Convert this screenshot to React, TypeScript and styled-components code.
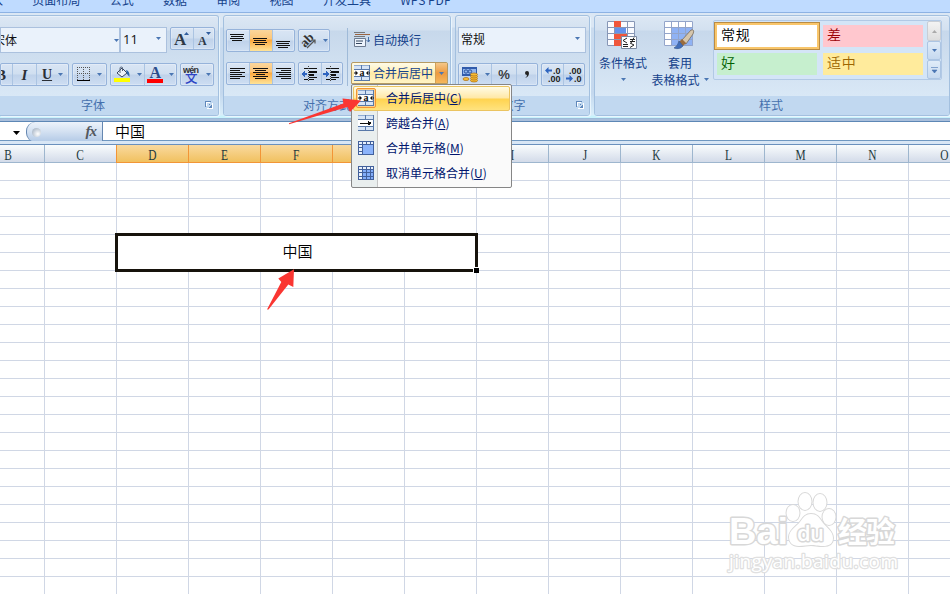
import React from "react";
import styled, { createGlobalStyle, css } from "styled-components";

const Global = createGlobalStyle`
  * { box-sizing: border-box; }
  html, body { margin: 0; padding: 0; overflow: hidden; }
  body { font: 12px/16px "Noto Sans CJK SC", "Noto Sans", sans-serif; color: #15428b; background: #fff; }
  svg { display: block; flex: none; }
`;

const Window = styled.div`
  position: relative;
  width: 950px;
  height: 594px;
  overflow: hidden;
  display: flex;
  flex-direction: column;
  background: #fff;
`;

/* ---------- tabs ---------- */
const TabStrip = styled.nav`
  flex: none;
  height: 13px;
  display: flex;
  align-items: flex-end;
  gap: 29.3px;
  padding: 0 0 4px;
  margin-left: -21px;
  background: #bfdbff;
  border-bottom: 1px solid #8db2e3;
  white-space: nowrap;
  overflow: hidden;
`;
const Tab = styled.span`
  line-height: 16px;
`;

/* ---------- ribbon ---------- */
const Ribbon = styled.header`
  flex: none;
  height: 109px;
  display: grid;
  grid-template-columns: 219px 228px 135px 356px;
  grid-template-rows: 101px;
  column-gap: 4px;
  padding-top: 2px;
  background: linear-gradient(#dbe7f4 0 14px, #cbdcef 15px, #c4d8ee 80px, #d9eefa 102px, #c8f3fc 103px 105px, #9dbad8 105px 106px, #a9bfdc 106px 108px, #5d87b5 108px);
`;
const Group = styled.section<{ $first?: boolean }>`
  display: flex;
  flex-direction: column;
  border: 1px solid #a3c0df;
  border-left-width: ${(p) => (p.$first ? 0 : 1)}px;
  border-radius: ${(p) => (p.$first ? "0 3px 3px 0" : "3px")};
  box-shadow: 1px 1px 0 #e9f5fd, inset 0 1px 0 #e8f0f9;
  background: linear-gradient(#dce7f4 0, #d3e1f0 14px, #c7d8eb 15px, #d9e8f6 80px);
  overflow: hidden;
`;
const GroupBody = styled.div<{ $pad?: string }>`
  flex: none;
  height: 80px;
  padding: ${(p) => p.$pad || "0"};
`;
const GroupLabel = styled.footer<{ $shift?: number }>`
  flex: 1;
  display: grid;
  grid-template-columns: 1fr auto;
  align-items: center;
  background: #c1d8f0;
  color: #4570ad;
  text-align: center;
  padding: 0 4px 1px ${(p) => p.$shift || 0}px;
`;
const Row = styled.div<{ $gap?: number; $mt?: number; $align?: string }>`
  display: flex;
  align-items: ${(p) => p.$align || "center"};
  gap: ${(p) => p.$gap ?? 3}px;
  margin-top: ${(p) => p.$mt ?? 0}px;
`;
const Combo = styled.div<{ $w: number; $pad?: number }>`
  width: ${(p) => p.$w}px;
  height: 26px;
  display: flex;
  align-items: center;
  justify-content: space-between;
  padding: 0 5px 3px ${(p) => p.$pad ?? 2}px;
  background: #eaf2fb;
  border: 1px solid #abc1de;
  color: #111;
  white-space: nowrap;
`;
const ButtonSet = styled.div`
  display: flex;
  height: 23px;
  border: 1px solid #96b3da;
  border-radius: 2px;
  background: linear-gradient(#d9e5f4 0, #d0dff0 10px, #bfd2ea 11px, #cfdff3 22px);
  box-shadow: inset 0 0 0 1px rgba(255, 255, 255, 0.25);
`;
const Tool = styled.button<{ $w: number; $on?: boolean; $end?: boolean }>`
  width: ${(p) => p.$w}px;
  height: 21px;
  display: flex;
  align-items: center;
  justify-content: ${(p) => (p.$end ? "flex-start" : "center")};
  gap: 6px;
  padding: 0;
  border: 0;
  background: ${(p) => (p.$on ? "linear-gradient(#fbd69c, #fdc679 9px, #fca93e 10px, #fee398 21px)" : "none")};
  & + & { border-left: 1px solid #abc4e2; }
`;
const Letter = styled.span<{ $size: number; $italic?: boolean; $line?: boolean }>`
  font: ${(p) => (p.$italic ? "italic " : "")}bold ${(p) => p.$size}px/18px "Liberation Serif", serif;
  color: #2b2f36;
  ${(p) => p.$line && css`text-decoration: underline;`}
`;
const Percent = styled.span`
  font: 13px/18px "Liberation Sans", sans-serif;
  -webkit-text-stroke: 0.2px #222;
  color: #222;
`;
const AlignColumns = styled.div`
  flex: none;
  display: flex;
  height: 80px;
`;
const AlignLeft = styled.div`
  width: 124px;
  height: 58px;
  margin-top: 12px;
  padding: 1px 0 0 2px;
  border-right: 1px solid #9fbad8;
`;
const AlignRight = styled.div`
  display: flex;
  flex-direction: column;
  padding: 14px 0 0 3px;
`;
const WrapButton = styled.div`
  height: 19px;
  display: flex;
  align-items: center;
  gap: 3px;
  padding-left: 3px;
`;
const MergeButton = styled.div`
  width: 97px;
  height: 22px;
  margin-top: 13px;
  display: grid;
  grid-template-columns: 83px 12px;
  border: 1px solid #b59a62;
  border-radius: 2px 2px 0 0;
  background: linear-gradient(#fffbe8, #fff2bd 8px, #ffe9a5 10px, #fff3c5);
  white-space: nowrap;
`;
const MergeMain = styled.div`
  display: flex;
  align-items: center;
  gap: 3px;
  padding: 0 0 1px 2px;
`;
const MergeDrop = styled.div`
  display: grid;
  place-items: center;
  border-left: 1px solid #d1a257;
  background: linear-gradient(#f5c789, #ed9a3f 10px, #f5b75c);
`;

/* ---------- styles group ---------- */
const StyleColumns = styled.div`
  flex: none;
  display: grid;
  grid-template-columns: 57px 61px 229px;
  height: 80px;
`;
const BigButton = styled.div<{ $dx?: number }>`
  display: flex;
  flex-direction: column;
  align-items: center;
  padding-top: 5px;
  margin-left: ${(p) => p.$dx ?? -1}px;
  white-space: nowrap;
`;
const BigText = styled.div`
  height: 17px;
  display: flex;
  align-items: center;
  justify-content: center;
  gap: 4px;
`;
const BigIcon = styled.div`
  height: 33px;
  margin-left: -1px;
`;
const Gallery = styled.div`
  display: grid;
  grid-template-columns: 1fr 14px;
  width: 229px;
  height: 60px;
  margin-top: 4px;
  border: 1px solid #b2c9e5;
  border-radius: 2px;
  background: #d4e5f7;
`;
const Swatches = styled.div`
  display: grid;
  grid-template-columns: 100px 100px;
  grid-template-rows: 22px 22px;
  gap: 6px;
  padding: 4px 0 0 3px;
`;
const Swatch = styled.div<{ $bg: string; $fg: string; $sel?: boolean }>`
  padding-left: 4px;
  font-size: 14px;
  line-height: 18px;
  letter-spacing: 0.8px;
  font-weight: 350;
  color: ${(p) => p.$fg};
  background: ${(p) => p.$bg};
  ${(p) => p.$sel && css`
    outline: 1px solid #b98b44;
    outline-offset: 2px;
    box-shadow: 0 0 0 2px #f9c66b;
  `}
`;
const Scroller = styled.div`
  display: grid;
  grid-template-rows: 20px 19px 19px;
`;
const ScrollBtn = styled.div<{ $off?: boolean }>`
  display: grid;
  place-items: center;
  border: 1px solid ${(p) => (p.$off ? "#c9ced5" : "#acc5e3")};
  border-radius: 2px;
  background: ${(p) => (p.$off ? "linear-gradient(#f3f3f3, #dedede)" : "linear-gradient(#e0ecf8, #c6d9ef)")};
`;

/* ---------- formula bar ---------- */
const FormulaBar = styled.div`
  flex: none;
  height: 19px;
  display: grid;
  grid-template-columns: 26px 77px 1fr;
  background: #fff;
  border-bottom: 1px solid #6f97c0;
`;
const NameBox = styled.div`
  display: flex;
  align-items: center;
  justify-content: flex-end;
  padding: 2px 6px 0 0;
`;
const FxBar = styled.div`
  display: flex;
  align-items: center;
  justify-content: space-between;
  padding: 0 6px 0 5px;
  border-left: 1px solid #6587b1;
  border-right: 1px solid #6587b1;
  border-radius: 9px 0 0 9px;
  background: linear-gradient(#edf3fb, #d5e2f2 45%, #b2c9e6);
`;
const Knob = styled.i`
  width: 9px;
  height: 9px;
  border-radius: 50%;
  background: radial-gradient(circle at 65% 65%, #fff, #c5ced9 55%, #98a8bc);
`;
const Fx = styled.span`
  font: italic bold 15px/16px "Liberation Serif", serif;
  color: #53585f;
  letter-spacing: -1px;
  padding-bottom: 2px;
`;
const CellText = styled.span`
  font-size: 15px;
  line-height: 17px;
  font-weight: 350;
  color: #000;
`;
const FormulaInput = styled.div`
  padding: 0 0 3px 12px;
  display: flex;
  align-items: center;
`;
const Gutter = styled.div`
  flex: none;
  height: 4px;
  background: #d8e6f5;
  border-bottom: 1px solid #6a90bd;
`;

/* ---------- sheet ---------- */
const cols = css`
  display: grid;
  grid-template-columns: 45px repeat(13, 72px);
  width: 981px;
`;
const HeadRow = styled.div`
  ${cols}
  flex: none;
  height: 18px;
  grid-template-rows: 18px;
`;
const Head = styled.div<{ $sel?: boolean; $first?: boolean }>`
  display: grid;
  place-items: center;
  height: 18px;
  padding-top: 3px;
  margin-left: ${(p) => (p.$first ? -28 : 0)}px;
  border-right: 1px solid ${(p) => (p.$sel ? "#f29536" : "#9eb6ce")};
  border-bottom: 1px solid ${(p) => (p.$sel ? "#f29536" : "#9eb6ce")};
  background: ${(p) => (p.$sel ? "linear-gradient(#f9d99f, #f1c15f)" : "linear-gradient(#f9fcfd, #d3dbe9)")};
  box-shadow: ${(p) => (p.$sel ? "-1px 0 0 #f29536" : "none")};
`;
const HeadLetter = styled.span`
  font: 15px/14px "Liberation Serif", serif;
  color: #1e393d;
  transform: scaleX(0.76);
`;
const Sheet = styled.main`
  ${cols}
  grid-auto-rows: 18px;
`;
const Cell = styled.div<{ $r: number; $c: number }>`
  grid-row: ${(p) => p.$r};
  grid-column: ${(p) => p.$c};
  border-right: 1px solid #d0d7e5;
  border-bottom: 1px solid #d0d7e5;
`;
const MergedCell = styled.div`
  position: relative;
  grid-row: 5 / 7;
  grid-column: 3 / 8;
  margin: -2px -1px -1px -2px;
  border: 3px solid #17130c;
  padding: 0 0 4px 2px;
  display: grid;
  place-items: center;
  background: #fff;
  z-index: 1;
`;
const FillHandle = styled.i`
  position: absolute;
  right: -4px;
  bottom: -4px;
  width: 6px;
  height: 6px;
  background: #000;
  border: solid #fff;
  border-width: 1px 0 0 1px;
`;

/* ---------- popup menu ---------- */
const Menu = styled.div`
  position: absolute;
  left: 351px;
  top: 84px;
  width: 161px;
  height: 104px;
  padding: 1px;
  border: 1px solid #868686;
  border-radius: 2px;
  background: linear-gradient(90deg, #e9eeee 0 25px, #c5c5c5 25px 26px, #fafafa 26px);
`;
const MenuItem = styled.div<{ $hot?: boolean }>`
  height: 25px;
  display: grid;
  grid-template-columns: 33px 1fr;
  align-items: center;
  color: #00156e;
  white-space: nowrap;
  ${(p) => p.$hot && css`
    grid-template-columns: 32px 1fr;
    border: 1px solid #ebc461;
    border-radius: 2px;
    background: linear-gradient(#fffbe5, #ffe8a6 11px, #ffd34f 12px, #ffe37f);
  `}
`;
const MenuText = styled.span`
  padding-bottom: 1px;
`;
const MenuIcon = styled.span<{ $hot?: boolean }>`
  width: 20px;
  height: 20px;
  display: grid;
  place-items: center;
  margin: 0 0 1px ${(p) => (p.$hot ? 2 : 3)}px;
  border: 1px solid ${(p) => (p.$hot ? "#f29536" : "transparent")};
  border-radius: 2px;
  background: ${(p) => (p.$hot ? "#fdd18b" : "none")};
`;
const Overlay = styled.svg<{ $x: number; $y: number }>`
  position: absolute;
  left: ${(p) => p.$x}px;
  top: ${(p) => p.$y}px;
  z-index: 3;
  pointer-events: none;
`;
const Clip = styled.span<{ $n?: number }>`
  display: flex;
  justify-content: flex-end;
  width: ${(p) => p.$n ?? 16}px;
  overflow: hidden;
`;
const Size = styled.span`
  font: 13px/18px "Open Sans", sans-serif;
`;
const LabelText = styled.span<{ $dx: number }>`
  margin-right: ${(p) => -p.$dx}px;
  white-space: nowrap;
`;

/* ---------- icons ---------- */
const Down = ({ c = "#4a76b3", w = 5 }: { c?: string; w?: number }) => (
  <svg width={w} height={(w + 1) / 2} viewBox={`0 0 ${w} ${(w + 1) / 2}`}>
    <path d={`M0 0H${w}L${w / 2} ${(w + 1) / 2}Z`} fill={c} />
  </svg>
);
const Comma = () => (
  <svg width="6" height="9"><path d="M3 1a2 2 0 1 0 0 4q0 2-2 3 4-1 4-5 0-2-2-2z" fill="#222" /></svg>
);
const Lines = ({ rows, top = 3, align = "c" }: { rows: number[]; top?: number; align?: string }) => (
  <svg width="16" height="18" shapeRendering="crispEdges">
    {rows.map((w, i) => (
      <rect key={i} x={align === "l" ? 0 : align === "r" ? 15 - w : Math.floor((15 - w) / 2)} y={top + i * 2} width={w} height="1" fill="#111" />
    ))}
  </svg>
);
const Indent = ({ right }: { right?: boolean }) => (
  <svg width="18" height="16" shapeRendering="crispEdges">
    <path d="M3 2.500h4M8 2.500h8M8 11.500h8M3 13.500h4M8 13.500h5" stroke="#111" />
    <path d="M8 6h8M8 9h5" stroke="#111" strokeWidth="2" />
    <path d="M7.500 0v16" stroke="#444" strokeDasharray="1 1" />
    <path d={right ? "M6 8L3 4.500V7H0v2h3v2.500z" : "M0 8l3.500-3.500V7H6v2H3.500v2.500z"} fill="#2f65c0" />
  </svg>
);
const Launcher = () => (
  <svg width="9" height="9" viewBox="0 0 9 9" shapeRendering="crispEdges">
    <path d="M.5 6V.5H6M3.500 3.500h1" fill="none" stroke="#5f87ba" />
    <path d="M3 7h4V3z" fill="#5f87ba" />
    <path d="M7.500 2v5.500H2M1.500 5V1.500H5" fill="none" stroke="#fff" />
  </svg>
);
const MergeIcon = ({ kind = "center" }: { kind?: string }) => (
  <svg width="16" height="16" viewBox="0 0 16 16" shapeRendering="crispEdges">
    <path d="M0 0h16v16H0z" fill="#8fabd3" />
    <path d="M0 1h7v3H0zM8 1h7v3H8zM0 12h7v3H0zM8 12h7v3H8z" fill="#d6e4f6" />
    <path d="M0 4.500h16M0 11.500h16M0 15.500h16M7.500 0v4M7.500 12v4M15.500 0v16" stroke="#5878a8" />
    <path d="M0 5h15v6H0z" fill="#fff" />
    {kind === "center" ? (
      <g shapeRendering="auto">
        <path d="M4 8L1.500 5.500v5zM12 8l2.500-2.500v5zM0 7.500h2v1H0zM14 7.500h2v1h-2z" fill="#111" transform="matrix(-1 0 0 1 16 0)" />
        <text x="8" y="10.500" textAnchor="middle" fontFamily="Liberation Serif, serif" fontWeight="700" fontSize="10" fill="#111">a</text>
      </g>
    ) : (
      <path d="M2 7.500h8V6l4 2-4 2.500V8.500H2z" fill="#111" />
    )}
  </svg>
);
const GridIcon = ({ split }: { split?: boolean }) => (
  <svg width="16" height="14" viewBox="0 0 16 14" shapeRendering="crispEdges">
    <path d="M0 0h16v14H0z" fill="#42609c" />
    <path d="M1 1h3v2H1zM5 1h3v2H5zM9 1h3v2H9zM13 1h2v2h-2zM1 4h3v2H1zM1 7h3v3H1zM1 11h3v2H1z" fill="#e8f0fc" />
    {split ? <path d="M5 4h3v2H5zM9 4h3v2H9zM13 4h2v2h-2zM5 7h3v3H5zM9 7h3v3H9zM13 7h2v3h-2zM5 11h3v2H5zM9 11h3v2H9zM13 11h2v2h-2z" fill="#82adfa" /> : <path d="M5 4h10v9H5z" fill="#8bb3fb" />}
  </svg>
);
const FontSizer = ({ big }: { big?: boolean }) => (
  <svg width="18" height="18">
    <text x={big ? 1 : 3} y="15" fontFamily="Liberation Serif, serif" fontWeight="700" fontSize={big ? 17 : 12} fill="#2e3947">A</text>
    <path d={big ? "M11 5h5l-2.500-3z" : "M11 2h5l-2.500 3z"} fill="#315e9e" />
  </svg>
);
const Borders = () => (
  <svg width="14" height="15" shapeRendering="crispEdges">
    <path d="M.5 0v13M6.500 0v13M12.500 0v13M0 .5h13M0 6.500h13" stroke="#555" strokeDasharray="1 1" />
    <path d="M0 13.500h13" stroke="#000" />
  </svg>
);
const Bucket = () => (
  <svg width="17" height="17" viewBox="0 0 17 17">
    <path d="M3 7l5-5 5 5-5 4z" fill="#eef3fb" stroke="#37465e" />
    <path d="M6 7V3q0-3 2.500-1.500V5" fill="none" stroke="#526078" />
    <path d="M12 4q4 1 3.500 7L13 8z" fill="#2d66a9" />
    <path d="M0 12h16v4H0z" fill="#ff0" />
  </svg>
);
const FontColor = () => (
  <svg width="16" height="18">
    <text x="2.500" y="12" fontFamily="Liberation Serif, serif" fontWeight="700" fontSize="16" fill="#2d4d8b">A</text>
    <path d="M0 13h16v4H0z" fill="#f00" />
  </svg>
);
const Phonetic = () => (
  <svg width="17" height="19">
    <text x="0" y="8" fontFamily="Liberation Sans, sans-serif" fontWeight="700" fontSize="9" textLength="16" fill="#333">wén</text>
    <text x="2" y="18" fontFamily="Noto Sans CJK SC, sans-serif" fontWeight="500" fontSize="12.500" fill="#2d45c5">文</text>
  </svg>
);
const Rotate = () => (
  <svg width="16" height="16">
    <text x="1" y="12" fontFamily="Liberation Serif, serif" fontWeight="700" fontSize="13" transform="rotate(-45 6 10)" fill="#333">ab</text>
    <path d="M6 15L14 7M10.500 7H14v3.500" fill="none" stroke="#555" strokeWidth="1.200" />
  </svg>
);
const WrapIcon = () => (
  <svg width="16" height="16">
    <path d="M0 .5h11M0 4.500h11" stroke="#777" />
    <path d="M1 2.500h15" stroke="#9b6441" />
    <path d="M.5 6.500h11v8H.5z" fill="#edf4fd" stroke="#6c7b90" />
    <path d="M2 9h7M2 11.500h6" stroke="#33465f" />
    <path d="M14.500 5v5l-2-2m2 2l1.500-2" stroke="#456fa8" fill="none" />
  </svg>
);
const Currency = () => (
  <svg width="18" height="17" viewBox="0 0 18 17">
    <path d="M1 1h15v9H1z" fill="#315bab" />
    <path d="M2 3h13v5H2z" fill="#93b6ed" />
    <circle cx="5" cy="5.500" r="1.700" fill="none" stroke="#27509c" /><circle cx="9" cy="5.500" r="1.700" fill="none" stroke="#27509c" />
    <g fill="#f8bd35" stroke="#a86a13" strokeWidth=".7">
      <ellipse cx="13" cy="14.500" rx="3.500" ry="1.500" /><ellipse cx="13" cy="12.500" rx="3.500" ry="1.500" />
      <ellipse cx="13" cy="10.500" rx="3.500" ry="1.500" /><ellipse cx="13" cy="8.500" rx="3.500" ry="1.500" />
      <ellipse cx="5" cy="13" rx="3" ry="1.500" />
    </g>
  </svg>
);
const Decimals = ({ less }: { less?: boolean }) => (
  <svg width="18" height="17" fontFamily="Liberation Sans, sans-serif" fontSize="9" fontWeight="700" fill="#222">
    <text x="16.500" y="7.500" textAnchor="end">{less ? ".00" : ".0"}</text>
    <text x="16.500" y="15.500" textAnchor="end">{less ? ".0" : ".00"}</text>
    <path d={less ? "M8 12.500L4.500 9v2.500H1v2h3.500V16z" : "M1 4.500L4.500 1v2.500H8v2H4.500V8z"} fill="#2f65c0" />
  </svg>
);
const Conditional = () => (
  <svg width="31" height="30" viewBox="0 0 31 30">
    <path d="M0 0h28v25H0z" fill="#f9fbff" />
    <path d="M.5.5h27v24H.5zM7.500 0v25M13.500 0v25M20.500 0v25M0 6.500h28M0 12.500h28M0 18.500h28" fill="none" stroke="#8797b6" />
    <path d="M7 0h7v6H7zM7 13h13v5H7zM7 19h7v6H7z" fill="#ef563b" />
    <path d="M8 7h11v5H8z" fill="#6392ec" />
    <path d="M14.500 15.500h15v12h-15z" fill="#fff" stroke="#7a89a0" />
    <path d="M20 17l-4 2.500 4 2.500M16 23.500h5M16 25.500h5M23 18.500h5M23 20.500h5M27 16.500l-3 5.500M23 22l4 2-4 2.500" fill="none" stroke="#222" />
  </svg>
);
const TableFormat = () => (
  <svg width="31" height="31" viewBox="0 0 31 31">
    <path d="M0 0h29v25H0z" fill="#fff" />
    <path d="M7 6h22v19H7z" fill="#8fb2f4" />
    <path d="M.5.5h28v24H.5zM7.500 0v25M14.500 0v25M21.500 0v25M0 6.500h29M0 12.500h29M0 18.500h29" fill="none" stroke="#93a5ca" />
    <path d="M27 9q4-1 2 4l-7 10-4-4z" fill="#d6c6ac" stroke="#786c5c" strokeWidth=".8" />
    <path d="M18 18l4 4-3 3-4-4z" fill="#9a6c3d" />
    <path d="M15 20l4 5q-3 4-9 2 4-2 5-7z" fill="#416eb9" stroke="#31548b" strokeWidth=".6" />
  </svg>
);

const letters = "BCDEFGHIJKLMNO".split("");
const cells = Array.from({ length: 24 * 14 }, (_, i) => ({ r: Math.floor(i / 14) + 1, c: (i % 14) + 1 })).filter(
  ({ r, c }) => !(r >= 5 && r <= 6 && c >= 3 && c <= 7)
);
const menuItems = [
  { text: "合并后居中", key: "C", icon: <MergeIcon />, hot: true },
  { text: "跨越合并", key: "A", icon: <MergeIcon kind="across" /> },
  { text: "合并单元格", key: "M", icon: <GridIcon /> },
  { text: "取消单元格合并", key: "U", icon: <GridIcon split /> },
];

export default function App() {
  return (
    <Window>
      <Global />
      <TabStrip>
        {["插入", "页面布局", "公式", "数据", "审阅", "视图", "开发工具", "WPS PDF"].map((t) => <Tab key={t}>{t}</Tab>)}
      </TabStrip>
      <Ribbon>
        <Group $first>
          <GroupBody $pad="11px 0 0 0">
            <Row $align="flex-start">
              <Row $gap={0}>
                <Combo $w={120} $pad={-1}><Clip>宋体</Clip><Down /></Combo>
                <Combo $w={47} $pad={2}><Size>11</Size><Down /></Combo>
              </Row>
              <ButtonSet><Tool $w={22}><FontSizer big /></Tool><Tool $w={21}><FontSizer /></Tool></ButtonSet>
            </Row>
            <Row $mt={10}>
              <ButtonSet>
                <Tool $w={11} $end><Letter $size={15}><Clip $n={5}>B</Clip></Letter></Tool>
                <Tool $w={24}><Letter $size={15} $italic>I</Letter></Tool>
                <Tool $w={32}><Letter $size={14} $line>U</Letter><Down /></Tool>
              </ButtonSet>
              <ButtonSet><Tool $w={33}><Borders /><Down /></Tool></ButtonSet>
              <ButtonSet><Tool $w={33}><Bucket /><Down /></Tool><Tool $w={32}><FontColor /><Down /></Tool></ButtonSet>
              <ButtonSet><Tool $w={32}><Phonetic /><Down /></Tool></ButtonSet>
            </Row>
          </GroupBody>
          <GroupLabel><LabelText $dx={-19}>字体</LabelText><Launcher /></GroupLabel>
        </Group>

        <Group>
          <AlignColumns>
            <AlignLeft>
              <Row>
                <ButtonSet>
                  <Tool $w={22}><Lines rows={[14, 12, 14, 10]} top={2} /></Tool>
                  <Tool $w={23} $on><Lines rows={[14, 12, 14, 10]} top={6} /></Tool>
                  <Tool $w={22}><Lines rows={[14, 12, 14, 10]} top={9} /></Tool>
                </ButtonSet>
                <ButtonSet><Tool $w={30}><Rotate /><Down /></Tool></ButtonSet>
              </Row>
              <Row $mt={10}>
                <ButtonSet>
                  <Tool $w={22}><Lines rows={[15, 10, 15, 12, 15, 10]} align="l" /></Tool>
                  <Tool $w={23} $on><Lines rows={[15, 11, 15, 9, 15, 11]} /></Tool>
                  <Tool $w={22}><Lines rows={[15, 10, 15, 12, 15, 10]} align="r" /></Tool>
                </ButtonSet>
                <ButtonSet><Tool $w={22}><Indent /></Tool><Tool $w={21}><Indent right /></Tool></ButtonSet>
              </Row>
            </AlignLeft>
            <AlignRight>
              <WrapButton><WrapIcon />自动换行</WrapButton>
              <MergeButton><MergeMain><MergeIcon />合并后居中</MergeMain><MergeDrop><Down /></MergeDrop></MergeButton>
            </AlignRight>
          </AlignColumns>
          <GroupLabel><LabelText $dx={-16}>对齐方式</LabelText></GroupLabel>
        </Group>

        <Group>
          <GroupBody $pad="11px 0 0 2px">
            <Combo $w={128}>常规<Down /></Combo>
            <Row $mt={10}>
              <ButtonSet>
                <Tool $w={32}><Currency /><Down /></Tool>
                <Tool $w={25}><Percent>%</Percent></Tool>
                <Tool $w={21}><Comma /></Tool>
              </ButtonSet>
              <ButtonSet><Tool $w={21}><Decimals /></Tool><Tool $w={21}><Decimals less /></Tool></ButtonSet>
            </Row>
          </GroupBody>
          <GroupLabel><LabelText $dx={-5}>数字</LabelText><Launcher /></GroupLabel>
        </Group>

        <Group>
          <StyleColumns>
            <BigButton><BigIcon><Conditional /></BigIcon><BigText>条件格式</BigText><BigText><Down /></BigText></BigButton>
            <BigButton $dx={-5}><BigIcon><TableFormat /></BigIcon><BigText>套用</BigText><BigText>表格格式<Down /></BigText></BigButton>
            <Gallery>
              <Swatches>
                <Swatch $bg="#fff" $fg="#000" $sel>常规</Swatch>
                <Swatch $bg="#ffc7ce" $fg="#9c0006">差</Swatch>
                <Swatch $bg="#c6efce" $fg="#006100">好</Swatch>
                <Swatch $bg="#ffeb9c" $fg="#9c6500">适中</Swatch>
              </Swatches>
              <Scroller>
                <ScrollBtn $off><svg width="5" height="3"><path d="M0 3h5L2.500 0z" fill="#aaa" /></svg></ScrollBtn>
                <ScrollBtn><Down /></ScrollBtn>
                <ScrollBtn><svg width="7" height="6"><path d="M0 .5h7M1 3h5L3.500 6z" fill="#4a76b3" stroke="#4a76b3" strokeWidth=".6" /></svg></ScrollBtn>
              </Scroller>
            </Gallery>
          </StyleColumns>
          <GroupLabel $shift={2}><LabelText $dx={0}>样式</LabelText></GroupLabel>
        </Group>
      </Ribbon>

      <FormulaBar>
        <NameBox><Down c="#000" w={7} /></NameBox>
        <FxBar><Knob /><Fx>fx</Fx></FxBar>
        <FormulaInput><CellText>中国</CellText></FormulaInput>
      </FormulaBar>
      <Gutter />
      <HeadRow>
        {letters.map((l, i) => <Head key={l} $first={i === 0} $sel={i >= 2 && i <= 6}><HeadLetter>{l}</HeadLetter></Head>)}
      </HeadRow>
      <Sheet>
        {cells.map(({ r, c }) => <Cell key={`${r}-${c}`} $r={r} $c={c} />)}
        <MergedCell><CellText>中国</CellText><FillHandle /></MergedCell>
      </Sheet>

      <Menu>
        {menuItems.map((m) => (
          <MenuItem key={m.key} $hot={m.hot}>
            <MenuIcon $hot={m.hot}>{m.icon}</MenuIcon>
            <MenuText>{m.text}(<u>{m.key}</u>)</MenuText>
          </MenuItem>
        ))}
      </Menu>

      <Overlay $x={285} $y={94} width="80" height="34">
        <path d="M4 29.300L58.300 9.500 57.500 4.500 76 6.500 65 18 62.500 13 4 30.300z" fill="#fa3632" />
      </Overlay>
      <Overlay $x={262} $y={264} width="40" height="50">
        <path d="M5 45.500L19.300 18 16.300 14.500 32 5.300 31.300 23 26.300 20.500 6.500 45.500z" fill="#fa3632" />
      </Overlay>
      <Overlay $x={724} $y={480} width="184" height="98" fill="#fff" stroke="#d8d8d8" strokeWidth="3" paintOrder="stroke" strokeLinejoin="round">
        <ellipse cx="69" cy="33" rx="6.500" ry="8" strokeWidth="2" /><ellipse cx="81" cy="21.500" rx="6.500" ry="8.500" strokeWidth="2" />
        <ellipse cx="96" cy="22.500" rx="6.500" ry="8.500" strokeWidth="2" /><ellipse cx="105" cy="37" rx="6.500" ry="8" strokeWidth="2" />
        <path d="M87 34c7 0 9 5 12 9s10 8 10 15c0 6-4 8-10 8s-8-1-12-1-7 1-12 1c-7 0-10-4-10-9 0-7 8-11 11-15s5-8 11-8z" strokeWidth="2" />
        <g fontFamily="Liberation Sans, sans-serif" fontWeight="700">
          <text x="5" y="64" fontSize="37" textLength="59" lengthAdjust="spacingAndGlyphs">Bai</text>
          <text x="73" y="61" fontSize="22" textLength="27" fontFamily="Open Sans, sans-serif" fontWeight="600">du</text>
          <text x="114" y="63" fontSize="29" fontFamily="Noto Sans CJK SC, sans-serif" textLength="57">经验</text>
          <text x="5" y="88" fontSize="19" fontWeight="400" fontFamily="Open Sans, sans-serif" textLength="169" strokeWidth="2.500" stroke="#e0e0e0">jingyan.baidu.com</text>
        </g>
      </Overlay>
    </Window>
  );
}
